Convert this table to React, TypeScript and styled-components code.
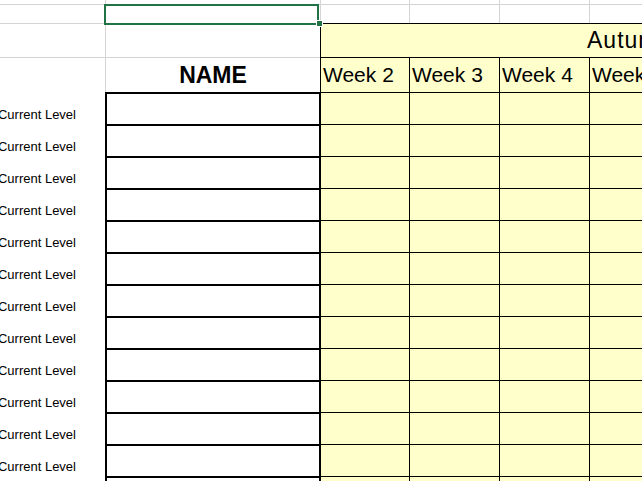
import styled, { createGlobalStyle } from "styled-components";

const GlobalStyle = createGlobalStyle`
  html, body {
    margin: 0;
    padding: 0;
    background: #ffffff;
    overflow: hidden;
  }
  * {
    box-sizing: border-box;
  }
`;

const GRID = "#d4d4d4";
const YELLOW = "#ffffcc";
const GREEN = "#217346";

const weeks = ["Week 2", "Week 3", "Week 4", "Week 5"];
const bodyRows = 13;

const Sheet = styled.div`
  width: 642px;
  height: 481px;
  overflow: hidden;
  display: grid;
  grid-template-columns: 105px 215px 89px 90px 90px 90px;
  grid-template-rows: 4px 19px 34px 35px repeat(${bodyRows}, 32px);
  font-family: "Liberation Sans", Arial, sans-serif;
  color: #000;
  background: #fff;
`;

// plain sheet cell showing the light gridlines
const GridCell = styled.div<{ $top?: boolean; $left?: boolean }>`
  border-top: ${(p) => (p.$top ? `1px solid ${GRID}` : "none")};
  border-left: ${(p) => (p.$left ? `1px solid ${GRID}` : "none")};
  background: #fff;
`;

const SelectedCell = styled(GridCell)`
  position: relative;
  z-index: 2;
`;

const Selection = styled.div`
  position: absolute;
  top: -1px;
  left: -2px;
  right: 1px;
  bottom: -2px;
  border: 2px solid ${GREEN};
`;

const FillHandle = styled.div`
  position: absolute;
  right: -2px;
  bottom: -3px;
  width: 5px;
  height: 5px;
  background: ${GREEN};
  box-shadow: 0 0 0 1px #fff;
`;

const Title = styled.div`
  grid-column: 3 / -1;
  background: ${YELLOW};
  border-top: 1px solid #000;
  border-left: 1px solid #000;
  display: flex;
  align-items: center;
  padding-left: 266px;
  font-size: 23px;
  letter-spacing: 1px;
  white-space: nowrap;
  overflow: hidden;
`;

const NameHeader = styled.div`
  border-top: 1px solid ${GRID};
  border-left: 1px solid ${GRID};
  display: flex;
  align-items: center;
  justify-content: center;
  font-size: 23px;
  font-weight: bold;
`;

const WeekHeader = styled.div`
  background: ${YELLOW};
  border-top: 1px solid #000;
  border-left: 1px solid #000;
  display: flex;
  align-items: center;
  padding-left: 2px;
  font-size: 21px;
  white-space: nowrap;
  overflow: hidden;
`;

const Label = styled.div`
  display: flex;
  align-items: flex-end;
  justify-content: flex-end;
  padding: 0 29px 2px 0;
  font-size: 13px;
  white-space: nowrap;
  overflow: hidden;
`;

const NameCell = styled.div`
  background: #fff;
  border-top: 2px solid #000;
  border-left: 2px solid #000;
  border-right: 1px solid #000;
`;

const WeekCell = styled.div`
  background: ${YELLOW};
  border-top: 1px solid #000;
  border-left: 1px solid #000;
`;

const App = () => {
  return (
    <>
      <GlobalStyle />
      <Sheet>
        {/* row 1 */}
        <GridCell />
        <GridCell $left />
        {weeks.map((w) => (
          <GridCell key={`r1-${w}`} $left />
        ))}

        {/* row 2 with the active cell */}
        <GridCell $top />
        <SelectedCell $top $left>
          <Selection />
          <FillHandle />
        </SelectedCell>
        {weeks.map((w) => (
          <GridCell key={`r2-${w}`} $top $left />
        ))}

        {/* row 3: term title */}
        <GridCell $top />
        <GridCell $top $left />
        <Title>Autumn Term</Title>

        {/* row 4: headers */}
        <GridCell $top />
        <NameHeader>NAME</NameHeader>
        {weeks.map((w) => (
          <WeekHeader key={w}>{w}</WeekHeader>
        ))}

        {/* pupils */}
        {Array.from({ length: bodyRows }).map((_, i) => [
          <Label key={`l-${i}`}>Current Level</Label>,
          <NameCell key={`n-${i}`} />,
          ...weeks.map((w) => <WeekCell key={`w-${i}-${w}`} />),
        ])}
      </Sheet>
    </>
  );
};

export default App;
